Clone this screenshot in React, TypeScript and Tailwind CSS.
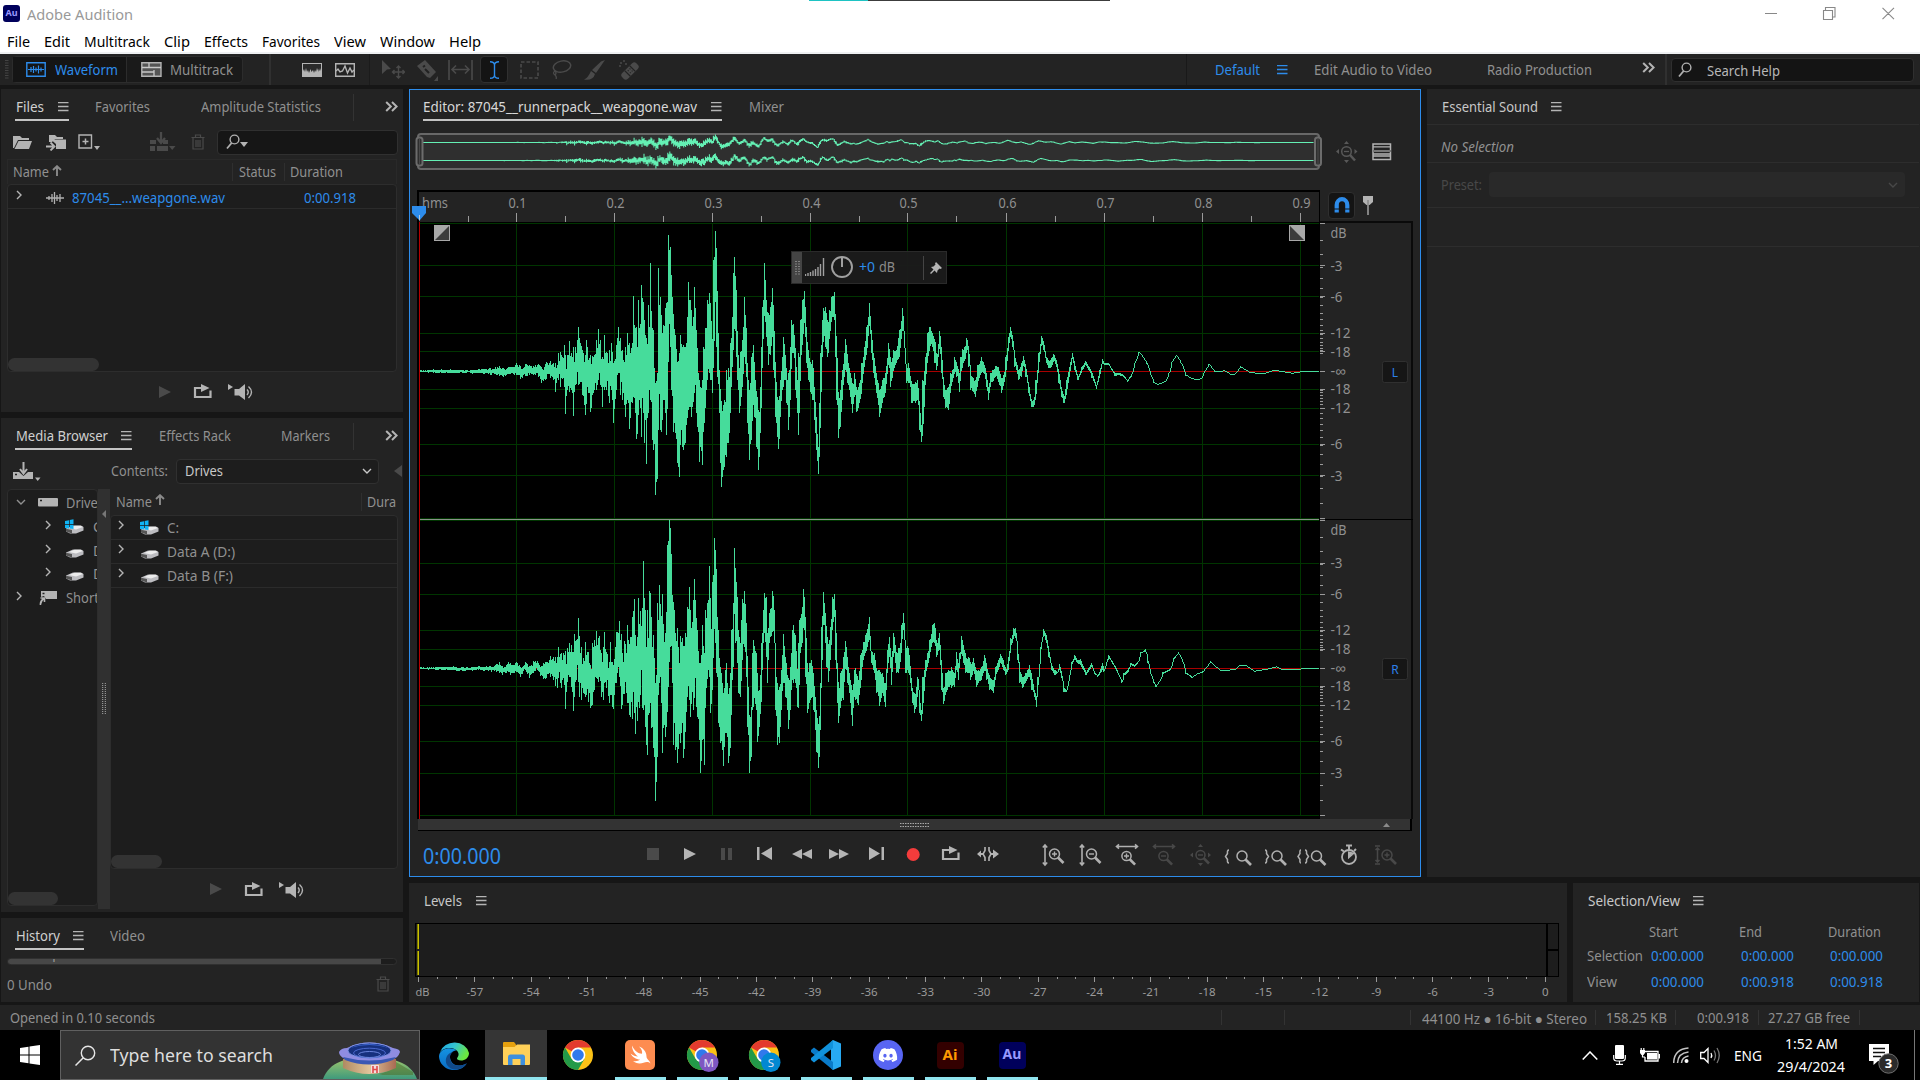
import React, { useLayoutEffect, useRef, useState } from "react";
import { FaDiscord } from "react-icons/fa";

/* ---------- text fitted to a fixed measure ---------- */
function T({ w, className = "", children }: { w: number; className?: string; children: string }) {
  const ref = useRef<HTMLSpanElement>(null);
  const [scale, setScale] = useState(1);
  useLayoutEffect(() => {
    if (ref.current) setScale(w / (ref.current.getBoundingClientRect().width || w));
  }, [w]);
  return (
    <span className={"inline-block shrink-0 " + className} style={{ width: w }}>
      <span ref={ref} className="inline-block origin-left whitespace-pre" style={{ transform: `scaleX(${scale})` }}>
        {children}
      </span>
    </span>
  );
}

function Svg({ w, h, box, className = "", children }: { w: number; h: number; box?: string; className?: string; children: React.ReactNode }) {
  return (
    <svg width={w} height={h} viewBox={box ?? `0 0 ${w} ${h}`} className={"shrink-0 " + className} fill="none">
      {children}
    </svg>
  );
}

/* ---------- small glyphs ---------- */
const Burger = ({ className = "" }: { className?: string }) => (
  <Svg w={11} h={10} className={className}><path d="M0 .5H10.5M0 4.5H10.5M0 8.5H10.5" stroke="currentColor" strokeWidth="1.3" /></Svg>
);
const More = ({ className = "" }: { className?: string }) => (
  <Svg w={13} h={11} className={className}><path d="M1.2 1L5.8 5.5L1.2 10M7 1L11.6 5.5L7 10" stroke="#b4b4b4" strokeWidth="2" /></Svg>
);
const Right = ({ className = "" }: { className?: string }) => (
  <Svg w={6} h={10} className={className}><path d="M1 1L5 5L1 9" stroke="#b4b4b4" strokeWidth="1.4" /></Svg>
);
const Down = ({ className = "" }: { className?: string }) => (
  <Svg w={10} h={6} className={className}><path d="M1 1L5 5L9 1" stroke="currentColor" strokeWidth="1.4" /></Svg>
);
const UpArrow = ({ className = "" }: { className?: string }) => (
  <Svg w={10} h={12} className={className}><path d="M5 11V2M1 5L5 1.2L9 5" stroke="#8a8a8a" strokeWidth="1.9" /></Svg>
);
const Trash = ({ className = "" }: { className?: string }) => (
  <Svg w={14} h={16} className={className}>
    <path d="M.5 3.5H13.5M4.5 3V1H9.5V3M2 4V15H12V4M5 6V13M7 6V13M9 6V13" stroke="#4a4a4a" strokeWidth="1.2" />
  </Svg>
);
const Play = ({ c = "#b4b4b4", className = "" }: { c?: string; className?: string }) => (
  <Svg w={12} h={14} className={className}><path d="M0 1L12 7L0 13Z" fill={c} /></Svg>
);
const Loop = ({ className = "" }: { className?: string }) => (
  <Svg w={20} h={15} className={className}>
    <path d="M6 4H2V13H17.5V6.5" stroke="#b4b4b4" strokeWidth="2.2" />
    <path d="M6 4H9" stroke="#b4b4b4" strokeWidth="2" />
    <path d="M8 0L16.5 4L8 8Z" fill="#b4b4b4" />
  </Svg>
);
const Speaker = ({ className = "" }: { className?: string }) => (
  <Svg w={27} h={18} className={className}>
    <path d="M0 1L5 4L0 7Z" fill="#b4b4b4" />
    <path d="M6.500 6H11L17 1V17L11 12.500H6.500Z" fill="#b4b4b4" />
    <path d="M19 6.500Q21.500 9 19 12M20.500 3.500Q26.500 9 20.500 15" stroke="#b4b4b4" strokeWidth="1.400" />
  </Svg>
);
const Lens = ({ className = "" }: { className?: string }) => (
  <Svg w={14} h={16} className={className}>
    <circle cx="8.5" cy="5.5" r="4.4" stroke="#b0b0b0" strokeWidth="1.4" />
    <path d="M5.600 9L1 14.500" stroke="#b0b0b0" strokeWidth="1.800" />
  </Svg>
);
const Drive = ({ win = false, className = "" }: { win?: boolean; className?: string }) => (
  <Svg w={20} h={16} className={className}>
    <path d="M1 9.500L8 6.500H16L18.500 8V11.500L11 14.500H5L1 12.500Z" fill="#bcbcc0" />
    <path d="M4 9L9.500 6.700H15.500L18 8L11 10.500Z" fill="#ececec" />
    <path d="M1 9.800L7 11V14.500L1 12.500Z" fill="#555" />
    {win && <path d="M0 2L4 1.200V5H0ZM4.700 1L8.500 .3V5H4.700ZM0 5.700H4V9.500L0 9ZM4.700 5.700H8.500V10L4.700 9.600Z" fill="#10b4f4" />}
  </Svg>
);

/* ---------- waveform samples: x, top, bottom triplets ---------- */
const LEFT_A = "60 871 877 100 868 879 150 868 880 200 869 880 250 867 882 270 864 884 297 857 888 310 864 892 325 860 882 350 850 886 362 858 898 375 852 888 400 857 885 415 852 890 425 862 908 440 845 895 450 842 893 460 850 900 467 850 935 475 820 900 482 815 920 493 796 920 497 825 1002 501 825 930 508 783 935 515 820 930 520 800 1008 526 800 915 535 742 915 542 790 905 548 810 945 556 825 1005 560 780 950 572 825 995 580 830 940 588 780 930 595 748 900 601 780 915 606 830 980 612 766 930 620 815 930 628 810 968 634 788 930 640 850 1028 648 795 930 655 740 880 661 775 945 668 810 960 676 800 1010 683 760 960 689 795 1048 697 790 960 701 648 950 707 745 1000 710 740 1078 715 660 1005 721 745 985 725 615 1070 731 665 1000 733 720 1090 739 775 1152 745 676 1000 748 740 930 751 550 960 757 745 1080 761 750 1110 766 910 1245 772 880 1190 775 565 1050 781 650 1050 785 740 1055 790 735 960 796 685 1000 799 670 1065 803 665 930 806 465 740 810 500 800 815 600 930 820 715 1055 826 765 1060 832 845 1150 838 820 1190 842 765 1060 846 800 1100 850 795 1110 856 800 1090 861 710 1015 865 605 990 870 660 980 874 690 1010 880 710 960 884 620 940 889 750 1000 893 845 1040 898 900 1145 902 920 1100 906 900 1155 910 800 1055 916 745 985 922 660 890 927 640 880 932 670 900 937 780 940 941 540 830 946 452 640 950 555 800 953 720 890 957 870 1000 962 950 1150 965 980 1220 970 975 1170 974 960 1160 978 870 1130 984 865 1090 989 905 1050 992 790 950 996 710 860 1000 580 800 1003 532 735 1008 630 830 1012 770 900 1018 880 998 1022 815 975 1026 780 920 1033 650 830 1038 745 890 1042 860 1030 1048 930 1140 1053 830 1080 1060 795 970 1064 880 1010 1070 940 1100 1076 990 1170 1080 920 1060 1084 800 960 1088 680 800 1093 548 700 1098 660 770 1104 700 855 1110 680 825 1117 625 765 1121 720 870 1126 870 1010 1131 950 1070 1136 960 1108 1140 900 1010 1146 830 930 1150 770 920 1154 800 900 1160 890 970 1165 880 1050 1170 800 960 1175 720 830 1181 740 820 1186 820 930 1192 900 1000 1196 820 1065 1202 720 850 1208 660 780 1213 632 720 1218 740 850 1224 810 900 1231 850 935 1238 840 960 1242 920 1020 1248 1010 1110 1254 1100 1182 1258 970 1120 1262 820 1000 1266 720 830 1271 685 770 1276 680 800 1283 730 830 1289 690 760 1295 650 720 1302 636 720 1306 720 830 1310 800 960 1315 950 1075 1320 930 1040 1326 870 960 1332 820 890 1336 778 870 1342 830 910 1350 880 950 1357 910 1000 1364 880 940 1370 930 997 1378 910 970 1385 850 930 1392 800 860 1400 740 820 1408 670 730 1413 750 820 1420 820 880 1428 880 940 1438 930 1010 1446 900 970 1455 880 940 1465 790 850 1472 840 920 1480 810 870 1488 810 850 1498 750 830";
const LEFT_B = "8 685 740 18 870 910 25 850 910 30 890 920 35 910 970 45 905 970 52 900 960 58 980 1050 63 1040 1087 68 900 1050 75 830 900 82 760 840 88 740 800 95 760 800 103 780 850 108 830 870 117 752 800 122 800 880 128 900 950 135 930 985 143 920 990 150 880 925 156 870 900 162 830 880 168 850 890 175 880 935 180 830 880 186 808 850 192 800 840 198 775 810 204 820 860 210 880 930 222 900 950 230 855 910 240 832 880 248 850 880 255 880 920 261 920 960 268 880 910 275 870 905 282 858 890 290 860 905 300 895 938 306 885 915 313 830 880 320 770 810 326 740 770 333 770 800 340 830 860 350 870 900 358 850 890 365 827 855 372 860 890 380 910 940 388 960 982 395 960 982 402 900 950 410 820 860 418 768 790 425 790 810 432 830 850 440 845 865 448 835 860 454 823 840 462 840 860 470 880 910 478 930 950 485 950 970 492 900 940 500 860 890 509 818 835 516 850 870 526 890 900 538 860 872 548 843 855 558 860 870 568 880 895 580 915 926 590 870 890 598 838 850 605 850 856 617 848 854 625 865 870 635 880 888 647 878 885 660 885 890 672 900 905 685 882 888 693 850 856 706 815 818 718 828 832 730 848 852 740 880 884 750 905 909 762 912 915 785 902 905 795 880 884 803 845 850 817 824 827 830 845 848 845 884 887 862 894 896 875 897 899 890 895 897 900 872 875 914 853 855 930 873 875 960 871 873 980 883 885 990 881 883 1007 859 861 1035 876 878 1075 880 882 1105 869 871 1160 878 880 1185 874 876 1240 872 874";
const RIGHT_A = "60 472 478 160 468 481 170 472 484 235 469 481 250 471 483 290 462 486 297 456 488 308 468 494 325 455 485 332 460 495 350 455 487 360 470 502 375 457 480 388 468 503 400 452 488 413 452 480 420 470 497 430 458 508 440 455 505 450 438 500 460 440 510 467 442 527 472 440 535 475 412 505 485 430 535 490 430 505 497 422 597 503 415 510 508 398 500 514 405 530 520 425 602 524 373 560 530 390 490 535 325 515 539 390 560 543 410 570 550 445 550 557 397 560 565 425 575 572 465 593 578 400 585 584 390 530 589 362 505 595 385 515 598 378 500 605 430 560 610 410 570 613 366 520 620 425 535 627 455 578 631 395 555 637 460 590 640 465 597 645 410 520 650 365 520 657 333 500 663 372 598 668 430 585 674 392 545 680 430 550 683 345 580 688 410 615 692 380 620 697 320 628 703 267 610 707 375 672 712 380 625 716 265 560 719 350 595 722 303 510 727 295 595 730 154 600 735 300 650 740 410 705 743 300 735 748 242 610 752 250 580 755 320 655 760 375 715 764 445 740 767 520 872 771 400 740 773 280 660 779 224 520 783 318 580 787 252 728 791 375 655 796 370 680 800 305 650 803 105 560 806 92 530 809 30 410 812 55 410 816 255 520 820 275 705 824 300 640 827 380 720 832 355 760 836 455 680 842 378 700 847 385 640 851 410 745 857 370 640 863 290 560 868 230 570 872 315 620 877 335 540 881 270 600 884 208 530 889 325 590 893 380 620 898 460 690 901 460 788 907 345 690 912 430 766 916 300 590 922 280 500 929 167 500 932 345 608 937 215 540 943 83 330 947 125 400 950 275 490 954 360 640 958 445 650 962 480 700 967 520 720 970 550 768 975 480 670 979 460 670 985 555 760 991 490 715 995 360 530 999 280 470 1003 115 270 1007 200 400 1011 260 460 1015 360 550 1020 400 560 1025 330 500 1028 268 400 1034 242 410 1039 355 500 1043 490 650 1048 620 790 1053 590 740 1057 430 560 1061 390 590 1068 430 600 1073 520 695 1078 540 650 1084 400 560 1089 300 400 1093 250 370 1098 262 440 1101 370 520 1107 310 400 1112 298 380 1118 242 360 1122 300 400 1127 490 600 1132 520 705 1138 530 700 1143 480 600 1149 372 520 1156 440 560 1165 505 658 1170 470 600 1176 360 510 1181 345 520 1187 390 520 1192 480 590 1196 400 595 1199 330 450 1206 290 400 1211 237 330 1216 330 500 1223 490 610 1228 460 580 1234 450 560 1241 500 600 1245 560 660 1250 610 725 1256 650 775 1260 520 660 1264 350 520 1270 247 320 1275 310 400 1280 370 470 1285 405 515 1291 350 440 1297 262 360 1302 253 320 1307 330 450 1311 460 580 1316 530 640 1322 490 580 1329 440 570 1336 392 470 1343 460 520 1350 510 580 1356 540 648 1362 480 560 1367 475 570 1374 510 585 1382 435 520 1389 395 450 1397 375 430 1407 320 390 1413 425 460 1422 430 490 1430 480 550 1438 480 588 1446 490 550 1455 520 590 1461 420 490 1467 382 440 1473 440 525 1481 368 420 1488 425 490 1495 415 490 1502 400 450";
const RIGHT_B = "5 345 400 10 308 350 16 400 490 25 415 490 30 470 520 36 540 580 43 550 610 48 530 590 53 500 540 58 570 610 63 600 633 68 500 590 75 450 490 82 430 470 88 390 430 96 345 400 102 338 400 108 400 440 116 370 420 122 450 540 128 540 583 136 490 550 144 480 530 152 470 535 160 490 530 166 425 480 172 460 510 177 430 450 182 378 430 188 410 460 195 440 490 202 440 490 210 455 510 217 445 480 225 480 530 233 480 520 240 470 510 250 435 480 257 470 510 265 500 540 276 510 548 283 470 500 290 450 480 297 432 460 305 450 480 313 480 495 320 440 480 328 385 410 337 353 380 342 355 385 348 420 450 355 480 520 362 500 535 370 490 520 382 466 500 390 500 540 397 540 560 403 560 590 408 500 530 415 410 430 424 357 370 432 375 400 440 420 440 448 465 480 456 480 495 465 485 490 471 463 480 478 490 505 485 535 545 492 540 546 500 495 510 508 455 465 516 436 448 524 450 460 533 448 465 540 465 478 550 485 495 566 460 470 575 488 492 585 495 500 598 460 480 603 478 485 610 455 462 617 435 445 625 450 457 637 470 478 648 495 500 656 512 518 662 490 496 672 480 490 683 460 466 693 465 470 703 455 460 712 427 430 726 418 424 733 450 460 740 485 492 750 515 520 757 526 530 765 515 520 778 487 492 800 475 480 808 445 450 823 427 430 835 450 455 845 487 492 863 500 503 880 490 492 895 484 488 918 454 457 935 470 473 950 481 483 990 477 479 1003 466 468 1023 466 468 1047 482 484 1080 477 479 1113 469 471 1130 477 479 1160 478 480 1200 474 476 1240 474 476";

type Sample = [number, number, number];
function parse(a: string, b: string, mid: number): Sample[] {
  const read = (s: string, off: number, k: number) => {
    const n = s.split(" ").map(Number);
    const out: Sample[] = [];
    for (let i = 0; i < n.length; i += 3) out.push([off + n[i] / k, (n[i + 1] - mid) / 3, (n[i + 2] - mid) / 3]);
    return out;
  };
  return [...read(a, 400, 3), ...read(b, 900, 2.9585)];
}
function columns(pts: Sample[]): Sample[] {
  const out: Sample[] = [];
  let k = 0;
  let seed = 7;
  const rnd = () => ((seed = (seed * 16807) % 2147483647) / 2147483647);
  for (let x = 420; x < 1319; x++) {
    while (k < pts.length - 2 && pts[k + 1][0] < x) k++;
    const [p, q] = [pts[k], pts[k + 1]];
    const f = Math.max(0, Math.min(1, (x - p[0]) / (q[0] - p[0])));
    let t = p[1] + (q[1] - p[1]) * f;
    let b = p[2] + (q[2] - p[2]) * f;
    const j = (b - t) * (x < 660 ? 0.28 : x < 1040 ? 0.14 : 0);
    t += rnd() * j;
    b -= rnd() * j;
    out.push([x, t, b]);
  }
  for (const [x, t, b] of pts) {
    const c = out[Math.floor(x) - 420];
    if (!c) continue;
    c[1] = Math.min(c[1], t);
    c[2] = Math.max(c[2], b);
  }
  for (let i = 1; i < out.length; i++) {
    const [, pt, pb] = out[i - 1];
    if (out[i][1] > pb) out[i][1] = pb;
    if (out[i][2] < pt) out[i][2] = pt;
  }
  return out;
}
const L = columns(parse(LEFT_A, LEFT_B, 874));
const R = columns(parse(RIGHT_A, RIGHT_B, 475));
const wave = (c: Sample[], mid: number) => c.map(([x, t, b]) => `M${x + 0.5} ${(mid + t).toFixed(1)}V${(mid + Math.max(b, t + 1)).toFixed(1)}`).join("");
const mini = (c: Sample[], mid: number) =>
  c.map(([x, t, b], i) => {
    const m = mid + ((t + b) / 2) * 0.054;
    const h = Math.max(0.55, (b - t) * (i % 2 ? 0.034 : 0.022));
    return `M${(423 + ((x - 420) * 891) / 899).toFixed(1)} ${(m - h).toFixed(1)}V${(m + h).toFixed(1)}`;
  }).join("");

const GX = [516.5, 614.5, 712.5, 810.5, 907.5, 1006.5, 1104.5, 1202.5, 1300.5];
const GL = [223.5, 265.5, 296.5, 333.5, 351.5, 389.5, 408.5, 444.5, 475.5, 518.5];
const GR = [520.5, 563.5, 594.5, 630.5, 649.5, 686.5, 705.5, 741.5, 773.5, 815.5];
const DBL: [string, number][] = [["dB", 233], ["-3", 266], ["-6", 297], ["-12", 333], ["-18", 352], ["-∞", 371], ["-18", 389], ["-12", 408], ["-6", 444], ["-3", 476]];
const DBR: [string, number][] = [["dB", 530], ["-3", 563], ["-6", 594], ["-12", 630], ["-18", 649], ["-∞", 668], ["-18", 686], ["-12", 705], ["-6", 741], ["-3", 773]];

function Overview() {
  return (
    <Svg w={908} h={38} box="415 133 908 38">
      <rect x="418" y="134" width="901" height="35" rx="3" fill="#2f2f2f" stroke="#686868" strokeWidth="2" />
      <path d={mini(L, 142.500)} stroke="#64f0b4" strokeWidth="1.100" />
      <path d={mini(R, 160.500)} stroke="#64f0b4" strokeWidth="1.100" />
      <rect x="416.500" y="137.500" width="6" height="28" rx="2.500" fill="#2f2f2f" stroke="#6c6c6c" strokeWidth="2" />
      <rect x="1315" y="137.500" width="6" height="28" rx="2.500" fill="#2f2f2f" stroke="#6c6c6c" strokeWidth="2" />
      <path d="M419.500 139V164M1318 139V164" stroke="#4a4a4a" />
    </Svg>
  );
}

function Chart() {
  return (
    <Svg w={903} h={629} box="417 190 903 629">
      <rect x="417" y="190" width="903" height="629" fill="#000" />
      <rect x="419" y="192" width="900" height="30" fill="#232323" />
      <g fontFamily="Noto Sans, sans-serif" fontSize="14" fill="#909090">
        <text x="422" y="208" textLength="26" lengthAdjust="spacingAndGlyphs">hms</text>
        {GX.map((x, i) => (
          <text key={x} x={x - 8} y="208" textLength="18" lengthAdjust="spacingAndGlyphs">{"0." + (i + 1)}</text>
        ))}
      </g>
      <g shapeRendering="crispEdges">
        {GX.map((x) => <path key={x} d={`M${x} 213V222`} stroke="#9a9a9a" />)}
        {[468, ...GX.slice(0, 8).map((x) => x + 49)].map((x) => <path key={x} d={`M${x} 216V222`} stroke="#9a9a9a" />)}
        {GX.map((x) => <path key={"g" + x} d={`M${x} 223V815`} stroke="#003500" />)}
        {[...GL, ...GR].map((y) => <path key={y} d={`M420 ${y}H1319`} stroke="#003500" />)}
        <path d="M420 371.500H1319M420 668.500H1319" stroke="#a80000" />
        <path d={wave(L, 371.300)} stroke="#46dc9b" />
        <path d={wave(R, 668.300)} stroke="#46dc9b" />
        <path d="M420 519.500H1319" stroke="#8a928a" />
        <path d="M419.500 222V819" stroke="#b40000" />
      </g>
      <rect x="434.500" y="225.500" width="15" height="15" fill="#3c3c3c" stroke="#a8a8a8" />
      <path d="M435 240V226H449Z" fill="#a8a8a8" />
      <rect x="1289.500" y="225.500" width="15" height="15" fill="#3c3c3c" stroke="#a8a8a8" />
      <path d="M1304 240V226H1290Z" fill="#a8a8a8" />
    </Svg>
  );
}

function Scale() {
  const ticks: number[] = [];
  for (let n = 1; n <= 18; n++) {
    const a = 147.5 * Math.pow(10, -n / 20);
    [371.3, 668.3].forEach((c) => ticks.push(Math.round(c - a), Math.round(c + a)));
  }
  return (
    <Svg w={93} h={598} box="1320 221 93 598">
      <rect x="1320" y="221" width="93" height="598" fill="#0a0a0a" />
      <rect x="1320" y="223" width="91" height="596" fill="#232323" />
      <rect x="1325" y="519" width="88" height="1" fill="#000" />
      <g shapeRendering="crispEdges" stroke="#9a9a9a">
        {ticks.map((y, i) => <path key={i} d={`M1320 ${y + 0.5}H1323`} />)}
        {[...GL, ...GR, 371.5, 668.5].map((y) => <path key={y} d={`M1320 ${y}H1325`} />)}
      </g>
      <g fontFamily="Noto Sans, sans-serif" fontSize="14" fill="#909090">
        {[...DBL, ...DBR].map(([t, y]) => (
          <text key={t + y} x="1330.500" y={y + 5} textLength={t === "dB" ? 16 : t === "-∞" ? 15 : t.length > 2 ? 20 : 12} lengthAdjust="spacingAndGlyphs">{t}</text>
        ))}
      </g>
      {[["L", 361], ["R", 658]].map(([t, y]) => (
        <g key={t}>
          <rect x="1382.500" y={Number(y) + 0.5} width="25" height="21" rx="2" fill="#161616" stroke="#303030" />
          <text x="1395" y={Number(y) + 15.5} fontFamily="Noto Sans, sans-serif" fontSize="12" fill="#2d7fe8" textAnchor="middle">{t}</text>
        </g>
      ))}
    </Svg>
  );
}

/* ---------- zoom tool glyphs, drawn on a 30×24 field ---------- */
function ZoomGlyph({ k }: { k: string }) {
  const off = k === "outw" || k === "full" || k === "sel";
  const c = off ? "#484848" : "#b0b0b0";
  const lens = (x: number, y: number, r: number) => (
    <>
      <circle cx={x} cy={y} r={r} stroke={c} strokeWidth="1.5" />
      <path d={`M${x + r * 0.7} ${y + r * 0.7}L${x + r + 4} ${y + r + 4}`} stroke={c} strokeWidth="2.6" />
    </>
  );
  const plus = (x: number, y: number, p: boolean) => <path d={`M${x - 2.5} ${y}H${x + 2.5}${p ? `M${x} ${y - 2.5}V${y + 2.5}` : ""}`} stroke={c} strokeWidth="1.4" />;
  return (
    <Svg w={30} h={24}>
      {(k === "in" || k === "out") && <><path d="M7 3V21M4.800 4.500L7 2L9.200 4.500M4.800 19.500L7 22L9.200 19.500" stroke={c} strokeWidth="1.600" />{lens(16.5, 11, 5)}{plus(16.5, 11, k === "in")}</>}
      {(k === "inw" || k === "outw") && <><path d="M5 3.500H25M7 1.300L4.500 3.500L7 5.700M23 1.300L25.500 3.500L23 5.700" stroke={c} strokeWidth="1.600" />{lens(14.5, 13, 4.6)}{plus(14.5, 13, k === "inw")}</>}
      {k === "full" && <>{lens(14.5, 12, 4.5)}{plus(14.5, 12, false)}<path d="M12 4L14.500 1L17 4ZM12 20L14.500 23L17 20ZM7 9.500L4 12L7 14.500ZM22 9.500L25 12L22 14.500Z" fill={c} /></>}
      {k === "l" && <>{lens(19, 13, 5)}<path d="M6 7Q4 7 4.500 10.500L2.500 13.500L4.500 16.500Q4 20 6 20" stroke={c} strokeWidth="1.500" /></>}
      {k === "r" && <>{lens(17, 13, 5)}<path d="M5 7Q7 7 6.500 10.500L8.500 13.500L6.500 16.500Q7 20 5 20" stroke={c} strokeWidth="1.500" /></>}
      {k === "lr" && <>{lens(19.5, 13, 5)}<path d="M4 7Q2.500 7 3 10.500L1 13.500L3 16.500Q2.500 20 4 20M8 7Q10 7 9.500 10.500L11.500 13.500L9.500 16.500Q10 20 8 20" stroke={c} strokeWidth="1.500" /></>}
      {k === "clock" && <><circle cx="15" cy="14" r="7" stroke={c} strokeWidth="1.800" /><path d="M15 14V9.500L19 10.500ZM15 7V3M12 2.500H18M7 6.500L10 8.500M20 8L22 6" stroke={c} fill={c} strokeWidth="2" /></>}
      {k === "sel" && <><path d="M4 3H9M4 21H9M6.500 5V19M4.500 7L6.500 5L8.500 7M4.500 17L6.500 19L8.500 17" stroke={c} strokeWidth="1.500" />{lens(16, 12, 5)}{plus(16, 12, true)}</>}
    </Svg>
  );
}

function Transport() {
  const g = "#b4b4b4";
  const cells = [
    <Svg w={12} h={12}><rect width="12" height="12" fill="#4a4a4a" /></Svg>,
    <Play />,
    <Svg w={12} h={12}><path d="M0 0H4V12H0ZM7 0H11V12H7Z" fill="#4a4a4a" /></Svg>,
    <Svg w={15} h={13}><path d="M0 0H2.500V13H0ZM15 0V13L4 6.500Z" fill={g} /></Svg>,
    <Svg w={20} h={12}><path d="M10 1V11L0 6ZM20 1V11L10 6Z" fill={g} /></Svg>,
    <Svg w={20} h={12}><path d="M0 1V11L10 6ZM10 1V11L20 6Z" fill={g} /></Svg>,
    <Svg w={15} h={13}><path d="M15 0H12.500V13H15ZM0 0V13L11 6.500Z" fill={g} /></Svg>,
    <Svg w={14} h={14}><circle cx="7.200" cy="7.500" r="6.500" fill="#f43c3c" /></Svg>,
    <Loop />,
    <Svg w={22} h={16}><path d="M8 1V4.500L6 8L8 11.500V15M12 1V4.500L14 8L12 11.500V15" stroke={g} strokeWidth="1.600" /><path d="M0 8L4 4.500V7H6V9H4V11.500ZM13 7H16V3.500L22 8L16 12.500V9H13Z" fill={g} /></Svg>,
  ];
  return (
    <div className="flex h-[45px] items-center">
      <T w={78} className="ml-[13px] mt-[5px] text-[21px] text-[#2d8ceb]">0:00.000</T>
      <div className="ml-[133px] flex items-center">
        {cells.map((c, i) => <div key={i} className="flex h-[24px] w-[37.250px] items-center justify-center">{c}</div>)}
      </div>
      <div className="ml-[28px] mt-[2px] flex items-center">
        {["in", "out", "inw", "outw", "full", "l", "r", "lr", "clock", "sel"].map((k) => (
          <div key={k} className="flex w-[37.050px] items-center justify-center"><ZoomGlyph k={k} /></div>
        ))}
      </div>
    </div>
  );
}

function Hud() {
  return (
    <div className="absolute left-[381px] top-[161px] flex h-[33px] w-[156px] items-center border border-[#2a2a2a] bg-[#1b1b1b]/95">
      <div className="flex h-full w-[10px] items-center justify-center bg-[#444]">
        <Svg w={5} h={14}><path d="M1 0V14M4 0V14" stroke="#aaa" strokeWidth="1.200" strokeDasharray="1 1.500" /></Svg>
      </div>
      <Svg w={20} h={18} className="-mt-[2px] ml-[3px]"><path d="M.5 18V16M3 18V15M5.500 18V14M8 18V12.500M10.500 18V11M13 18V9M15.500 18V6M18.500 18V0" stroke="#a0a0a0" strokeWidth="1.400" /></Svg>
      <Svg w={24} h={24} className="-mt-[2px] ml-[5px]"><circle cx="12" cy="12" r="10" stroke="#a0a0a0" strokeWidth="1.900" /><path d="M12 2V12" stroke="#a0a0a0" strokeWidth="2" /></Svg>
      <T w={16} className="-mt-[2px] ml-[5px] text-[14px] text-[#2d8ceb]">+0</T>
      <T w={16} className="-mt-[2px] ml-[4px] text-[14px] text-[#8a8a8a]">dB</T>
      <div className="ml-[28px] h-[24px] w-px bg-[#444]" />
      <Svg w={12} h={12} className="ml-[6px]"><path d="M6 0L12 6L10.500 7L9.500 6.500L7.500 8.500L7 11L4.500 8.500L1 12L0 11L3.500 7.500L1 5L3.500 4.500L5.500 2.500L5 1.500Z" fill="#b4b4b4" /></Svg>
    </div>
  );
}

function Editor() {
  return (
    <section className="relative flex h-[788px] w-[1012px] shrink-0 flex-col border border-[#2d8ceb] bg-[#232323]">
      <div className="flex h-[43px]">
        <div className="ml-[13px] flex h-[31px] w-[299px] items-center justify-between border-b-2 border-[#c4c4c4] pt-[5px] text-[#d8d8d8]">
          <T w={274}>Editor: 87045__runnerpack__weapgone.wav</T>
          <Burger className="text-[#b4b4b4]" />
        </div>
        <div className="ml-[27px] flex h-[31px] items-center pt-[3px]"><T w={35}>Mixer</T></div>
      </div>
      <div className="flex h-[57px]">
        <div className="ml-[5px]"><Overview /></div>
        <Svg w={22} h={22} className="ml-[13px] mt-[8px]">
          <circle cx="10.500" cy="10.500" r="4.800" stroke="#585858" strokeWidth="1.500" />
          <path d="M8 10.500H13" stroke="#585858" strokeWidth="1.300" /><path d="M14 14L19 19.500" stroke="#585858" strokeWidth="2.500" />
          <path d="M8 3L10.500 0L13 3ZM8 19L10.500 22L13 19ZM3 8L0 10.500L3 13ZM18.500 8L21.500 10.500L18.500 13Z" fill="#585858" />
        </Svg>
        <Svg w={20} h={18} className="ml-[14px] mt-[10px]"><path d="M1 1H18.500V16.500H1Z" stroke="#b4b4b4" strokeWidth="1.500" /><path d="M1 3.800H19M1 13H19M1 11H19" stroke="#b4b4b4" strokeWidth="1.300" /><path d="M1 8H19" stroke="#777" strokeWidth="2" /></Svg>
      </div>
      <div className="flex h-[629px]">
        <div className="ml-[7px]"><Chart /></div>
        <div className="flex w-[93px] flex-col">
          <div className="flex h-[31px] items-center">
            <div className="ml-[8px] flex h-[27px] w-[27px] items-center justify-center rounded-sm border border-[#2f2f2f] bg-[#141414]">
              <Svg w={16} h={17}><path d="M2.700 15.500V8A5.300 5.800 0 0 1 13.300 8V15.500" stroke="#2d8ceb" strokeWidth="4.200" /><path d="M0 12H5.500M10.500 12H16" stroke="#141414" /></Svg>
            </div>
            <Svg w={10} h={19} className="ml-[8px]"><path d="M0 0H10V6L6.500 9H3.500L0 6Z" fill="#b4b4b4" /><path d="M5 4V19" stroke="#8e8e8e" strokeWidth="1.800" /></Svg>
          </div>
          <Scale />
        </div>
      </div>
      <div className="ml-[8px] flex h-[12px] w-[994px] items-center border-b border-r-2 border-black bg-[#333]">
        <Svg w={30} h={4} className="ml-[482px]"><path d="M0 .5H30M0 3.500H30" stroke="#aaa" strokeDasharray="1.500 1" /></Svg>
        <Svg w={7} h={4} className="ml-[453px]"><path d="M0 4L3.500 0L7 4Z" fill="#8a8a8a" /></Svg>
      </div>
      <Transport />
      <Hud />
      <Svg w={15} h={17} className="absolute left-[2px] top-[115px]"><path d="M0 1H14V8L7.500 15.500L0 8Z" fill="#2d8ceb" /><path d="M7.500 10V15.500" stroke="#b9c6d4" /></Svg>
    </section>
  );
}

function Tab({ w, tw, children }: { w: number; tw: number; children: string }) {
  return (
    <div className="flex h-[32px] items-center justify-between border-b-2 border-[#c4c4c4] pl-px pt-[6px] text-[#d0d0d0]" style={{ width: w }}>
      <T w={tw}>{children}</T>
      <Burger className="text-[#b4b4b4]" />
    </div>
  );
}

function FilesPanel() {
  return (
    <section className="flex h-[323px] flex-col bg-[#232323]">
      <div className="flex h-[36px]">
        <div className="ml-[14px]"><Tab w={54} tw={28}>Files</Tab></div>
        <div className="flex items-center">
          <T w={55} className="ml-[26px]">Favorites</T>
          <T w={120} className="ml-[51px]">Amplitude Statistics</T>
          <div className="ml-[32px] h-[27px] w-px bg-[#333]" />
          <More className="-mt-[2px] ml-[31px]" />
        </div>
      </div>
      <div className="flex h-[34px] items-center">
        <Svg w={19} h={15} className="ml-[12px]"><path d="M0 13V1H7L9 3H16V5H5L1 13ZM5.500 6H19L16 14H1.500Z" fill="#b4b4b4" /></Svg>
        <Svg w={20} h={17} className="ml-[14px]"><path d="M3 8V1H9L11 3H17V5H9L6 8ZM9 5.500H20V15H10V10L6 6.500Z" fill="#b4b4b4" /><path d="M0 12.500H7M4.500 8.500L8.500 12.500L4.500 16.500" stroke="#b4b4b4" strokeWidth="1.800" /></Svg>
        <Svg w={22} h={16} className="ml-[12px]"><path d="M1 1H13.500V14H1Z" stroke="#b4b4b4" strokeWidth="1.400" /><path d="M4.500 7.500H10.500M7.500 4.500V10.500" stroke="#b4b4b4" strokeWidth="1.500" /><path d="M16 12H22L19 16Z" fill="#b4b4b4" /></Svg>
        <Svg w={26} h={20} className="ml-[50px]"><path d="M0 8H6V12H0ZM13 8H18V12H13ZM0 14H5V19H0ZM7 14H18V19H7ZM19 14H25.500L22.200 18Z" fill="#4a4a4a" /><path d="M11 0V9M7 6L11 11L15 6" stroke="#4a4a4a" strokeWidth="2.300" /></Svg>
        <Trash className="ml-[15px]" />
        <div className="ml-[12px] flex h-[25px] w-[181px] items-center rounded-sm border border-[#303030] bg-[#161616]">
          <Lens className="ml-[8px]" />
          <Svg w={8} h={5} className="mt-[5px]"><path d="M0 0H8L4 5Z" fill="#b4b4b4" /></Svg>
        </div>
      </div>
      <div className="mx-[6px] flex h-[25px] items-center border border-b-0 border-[#292929]">
        <T w={36} className="ml-[5px]">Name</T><UpArrow className="-mt-[3px] ml-[3px]" />
        <div className="ml-[170px] h-[18px] w-px bg-[#2f2f2f]" />
        <T w={37} className="ml-[6px]">Status</T>
        <div className="ml-[8px] h-[18px] w-px bg-[#2f2f2f]" />
        <T w={53} className="ml-[5px]">Duration</T>
      </div>
      <div className="mx-[6px] flex h-[188px] flex-col rounded-sm border border-[#2d2d2d] bg-[#1d1d1d]">
        <div className="flex h-[24px] items-center border-b border-[#2b2b2b] pt-[2px]">
          <Right className="-mt-[6px] ml-[8px]" />
          <Svg w={18} h={12} className="ml-[24px]"><path d="M0 6H18M3 4V8M6 2V10M8.500 0V12M11 3V9M14 2V10" stroke="#b0b0b0" strokeWidth="1.300" /></Svg>
          <T w={153} className="ml-[8px] text-[#2d8ceb]">87045__...weapgone.wav</T>
          <T w={52} className="ml-[79px] text-[#2d8ceb]">0:00.918</T>
        </div>
        <div className="mt-auto h-[13px] w-[91px] rounded-full bg-[#333]" />
      </div>
      <div className="flex h-[40px] items-center">
        <Play c="#4a4a4a" className="-mt-px ml-[158px]" /><Loop className="-mt-px ml-[22px]" /><Speaker className="ml-[15px]" />
      </div>
    </section>
  );
}

function MediaPanel() {
  return (
    <section className="mt-[6px] flex h-[494px] flex-col overflow-hidden bg-[#232323]">
      <div className="flex h-[36px]">
        <div className="ml-[14px]"><Tab w={117} tw={92}>Media Browser</Tab></div>
        <div className="flex items-center">
          <T w={72} className="ml-[27px]">Effects Rack</T>
          <T w={49} className="ml-[50px]">Markers</T>
          <div className="ml-[23px] h-[27px] w-px bg-[#333]" />
          <More className="-mt-[2px] ml-[31px]" />
        </div>
      </div>
      <div className="flex h-[34px] items-center">
        <Svg w={28} h={20} className="ml-[12px]"><path d="M0 11H6L10.500 15L15 11H20V18H0Z" fill="#b4b4b4" /><path d="M2 13.500H4" stroke="#232323" strokeWidth="1.500" /><path d="M10.500 1V12M7 8L10.500 12.500L14 8" stroke="#b4b4b4" strokeWidth="2" /><path d="M22 16.500H27.500L24.700 20Z" fill="#b4b4b4" /></Svg>
        <T w={57} className="ml-[70px]">Contents:</T>
        <div className="ml-[8px] flex h-[25px] w-[203px] items-center rounded-sm border border-[#303030] bg-[#1d1d1d] text-[#c8c8c8]">
          <T w={38} className="ml-[8px]">Drives</T><Down className="-mt-px ml-[139px]" />
        </div>
        <Svg w={8} h={12} className="ml-[15px]"><path d="M8 0V12L0 6Z" fill="#4a4a4a" /></Svg>
      </div>
      <div className="mt-px flex h-[420px] pl-[6px]">
        <div className="flex h-[417px] w-[91px] flex-col overflow-hidden rounded-sm border border-[#2d2d2d] bg-[#1d1d1d] pt-px">
          <div className="flex h-[24px] items-center">
            <Down className="-mt-[3px] ml-[8px]" />
            <Svg w={20} h={9} className="-mt-px ml-[12px]"><rect width="20" height="8.500" rx="1" fill="#b4b4b4" /><path d="M2 2.500H4" stroke="#222" strokeWidth="1.500" /></Svg>
            <T w={38} className="ml-[8px]">Drives</T>
          </div>
          {["C:", "Data A", "Data B"].map((d, i) => (
            <div key={d} className="flex h-[23.800px] items-center">
              <Right className="-mt-[4px] ml-[37px]" /><Drive win={i === 0} className="ml-[14px]" />
              <span className="ml-[8px] whitespace-pre">{d}</span>
            </div>
          ))}
          <div className="flex h-[24px] items-center">
            <Right className="-mt-[4px] ml-[8px]" />
            <Svg w={18} h={14} className="ml-[17px]"><path d="M2 0H18V8H7L5 5L2 6Z" fill="#b4b4b4" /><path d="M3.500 2.500H5.500" stroke="#222" strokeWidth="1.500" /><path d="M1.500 14Q1 10 5 7.500M1.500 7H5.500V11" stroke="#b4b4b4" strokeWidth="1.600" /></Svg>
            <T w={58} className="ml-[9px]">Shortcuts</T>
          </div>
          <div className="mt-auto h-[13px] w-[50px] shrink-0 rounded-full bg-[#333]" />
        </div>
        <div className="flex w-[12px] flex-col items-center bg-[#303030]">
          <Svg w={4} h={8} className="mt-[21px]"><path d="M4 0V8L0 4Z" fill="#777" /></Svg>
          <Svg w={4} h={31} className="mt-[165px]"><path d="M.7 0V31M3.300 0V31" stroke="#aaa" strokeDasharray="1 1" /></Svg>
        </div>
        <div className="flex w-[288px] flex-col">
          <div className="flex h-[26px] shrink-0 items-center">
            <T w={36} className="ml-[6px]">Name</T><UpArrow className="-mt-[4px] ml-[3px]" />
            <div className="ml-[196px] h-[18px] w-px bg-[#2f2f2f]" />
            <T w={29} className="ml-[5px]">Dura</T>
          </div>
          <div className="flex h-[354px] shrink-0 flex-col rounded-sm border border-[#2d2d2d] bg-[#1d1d1d]">
            {[["C:", 12], ["Data A (D:)", 68], ["Data B (F:)", 66]].map(([d, w], i) => (
              <div key={d} className="flex h-[23.900px] items-center border-b border-[#2b2b2b]">
                <Right className="-mt-[4px] ml-[7px]" /><Drive win={i === 0} className="ml-[16px] mt-[2px]" />
                <T w={Number(w)} className="ml-[7px] mt-[2px]">{String(d)}</T>
              </div>
            ))}
            <div className="mt-auto h-[13px] w-[51px] rounded-full bg-[#333]" />
          </div>
          <div className="flex h-[41px] shrink-0 items-center">
            <Play c="#4a4a4a" className="-mt-px ml-[100px]" /><Loop className="-mt-px ml-[22px]" /><Speaker className="ml-[15px]" />
          </div>
        </div>
      </div>
    </section>
  );
}

function HistoryPanel() {
  return (
    <section className="mt-[6px] flex h-[84px] flex-col bg-[#232323]">
      <div className="flex h-[36px]">
        <div className="ml-[14px]"><Tab w={69} tw={44}>History</Tab></div>
        <div className="flex items-center"><T w={35} className="ml-[26px]">Video</T></div>
      </div>
      <div className="mx-[6px] mt-[4px] flex h-[7px] overflow-hidden rounded-sm border border-[#303030] bg-[#1d1d1d]">
        <div className="h-full w-[373px] overflow-hidden bg-[#474747]">
          <span className="-mt-[12px] ml-[26px] block text-[13px] leading-[15px] text-[#999]">▪  Open</span>
        </div>
      </div>
      <div className="flex h-[37px] items-center">
        <T w={45} className="ml-[6px] mt-[3px]">0 Undo</T>
        <Trash className="ml-[324px] mt-px" />
      </div>
    </section>
  );
}

function EssentialPanel() {
  return (
    <section className="ml-[6px] flex h-[788px] flex-1 flex-col bg-[#232323] pr-px">
      <div className="flex h-[36px] shrink-0 items-center border-b border-[#2d2d2d]">
        <T w={96} className="ml-[15px] text-[#c8c8c8]">Essential Sound</T><Burger className="ml-[13px] text-[#b4b4b4]" />
      </div>
      <div className="flex h-[38px] shrink-0 items-center border-b border-[#2d2d2d] pt-[6px]"><T w={73} className="ml-[14px] italic">No Selection</T></div>
      <div className="flex h-[45px] shrink-0 items-center border-b border-[#2d2d2d] text-[#484848]">
        <T w={41} className="-mt-px ml-[14px]">Preset:</T>
        <div className="-mt-px ml-[7px] flex h-[25px] w-[416px] items-center justify-end rounded-sm bg-[#292929] pr-[7px]"><Down /></div>
      </div>
      <div className="h-[39px] shrink-0 border-b border-[#2d2d2d]" />
    </section>
  );
}

function Levels() {
  const ticks = Array.from({ length: 61 }, (_, i) => 418.5 + i * 18.78);
  return (
    <section className="flex h-[119px] w-[1158px] shrink-0 flex-col bg-[#232323]">
      <div className="flex h-[35px] items-center text-[#c8c8c8]"><T w={38} className="ml-[15px]">Levels</T><Burger className="ml-[14px] text-[#b4b4b4]" /></div>
      <div className="ml-[6px] mt-[5px]">
        <Svg w={1145} h={76} box="415 923 1145 76">
          <g shapeRendering="crispEdges">
            <rect x="415.500" y="923.500" width="1143" height="53" fill="#1d1d1d" stroke="#000" />
            <path d="M1546.500 924V976M1547 949.500H1559" stroke="#000" strokeWidth="2" />
            <path d="M417 924V949M417 951V975" stroke="#7d7a00" />
            <path d="M418.500 924V949M418.500 951V975" stroke="#c9c000" />
            {ticks.map((x, i) => <path key={i} d={`M${x} 977V${i % 3 ? 979 : 982}`} stroke="#9a9a9a" />)}
          </g>
          <g fontFamily="Noto Sans, sans-serif" fontSize="11.500" fill="#9a9a9a">
            <text x="415.500" y="996" textLength="14" lengthAdjust="spacingAndGlyphs">dB</text>
            {Array.from({ length: 20 }, (_, i) => {
              const v = -57 + i * 3;
              return <text key={v} x={ticks[(i + 1) * 3]} y="996" textAnchor="middle">{v}</text>;
            })}
          </g>
        </Svg>
      </div>
    </section>
  );
}

function SelectionView() {
  const b = "text-[#2d8ceb]";
  return (
    <section className="ml-[6px] flex h-[119px] w-[346px] flex-col bg-[#232323]">
      <div className="flex h-[35px] items-center text-[#c8c8c8]"><T w={92} className="ml-[15px]">Selection/View</T><Burger className="ml-[13px] text-[#b4b4b4]" /></div>
      <div className="flex h-[27px] items-center"><T w={29} className="ml-[76px]">Start</T><T w={23} className="ml-[61px]">End</T><T w={53} className="ml-[66px]">Duration</T></div>
      <div className="flex h-[22px] items-center"><T w={56} className="ml-[14px]">Selection</T><T w={53} className={"ml-[8px] " + b}>0:00.000</T><T w={53} className={"ml-[37px] " + b}>0:00.000</T><T w={53} className={"ml-[36px] " + b}>0:00.000</T></div>
      <div className="flex h-[29px] items-center"><T w={30} className="ml-[14px]">View</T><T w={53} className={"ml-[34px] " + b}>0:00.000</T><T w={53} className={"ml-[37px] " + b}>0:00.918</T><T w={53} className={"ml-[36px] " + b}>0:00.918</T></div>
    </section>
  );
}

function Header() {
  const menu: [string, number, string][] = [["File", 23, "ml-[7px]"], ["Edit", 26, "ml-[14px]"], ["Multitrack", 66, "ml-[14px]"], ["Clip", 26, "ml-[14px]"], ["Effects", 44, "ml-[14px]"], ["Favorites", 58, "ml-[14px]"], ["View", 32, "ml-[14px]"], ["Window", 55, "ml-[14px]"], ["Help", 32, "ml-[14px]"]];
  return (
    <header className="h-[54px] border-b-2 border-[#eef0f2] bg-white">
      <div className="flex h-px"><div className="ml-[809px] h-px w-[59px] bg-[#1ec3c3]" /><div className="h-px w-[242px] bg-[#3c3c3c]" /></div>
      <div className="flex h-[28px] items-center">
        <div className="-mt-[4px] ml-[3px] flex h-[17px] w-[17px] items-center justify-center rounded-[3px] bg-[#00005b] text-[9px] font-bold text-[#9999ff]">Au</div>
        <T w={106} className="-mt-[2px] ml-[7px] text-[15px] text-[#999]">Adobe Audition</T>
        <Svg w={130} h={13} className="-mt-[3px] ml-[1632px]"><path d="M0 6.500H12M58.500 3.500H67.500V12.500H58.500ZM60.500 3V.5H70V10H68M117.500 .8L129 12.200M129 .8L117.500 12.200" stroke="#888" strokeWidth="1.100" /></Svg>
      </div>
      <div className="flex h-[24px] items-center text-[15px] text-black">
        {menu.map(([t, w, m]) => <T key={t} w={w} className={m}>{t}</T>)}
      </div>
    </header>
  );
}

function Toolbar() {
  const d = "#4a4a4a";
  return (
    <div className="flex h-[31px] items-center bg-[#232323]">
      <Svg w={4} h={20} className="ml-[5px]"><path d="M0 .5H3.500M0 3H3.500M0 5.500H3.500M0 8H3.500M0 10.500H3.500M0 13H3.500M0 15.500H3.500M0 18H3.500" stroke="#444" /></Svg>
      <div className="ml-[3px] flex h-[27px] w-[231px] rounded-sm border border-[#2c2c2c] bg-[#1a1a1a]">
        <div className="flex w-[114px] items-center border-r border-[#2c2c2c] bg-[#151515]">
          <Svg w={20} h={15} className="ml-[13px]"><path d="M.8 .8H19.200V14.200H.8Z" stroke="#2d8ceb" strokeWidth="1.400" /><path d="M2 7.500H18M5 5V10M7.500 4V11M10 5.500V9.500M12.500 3.500V11.500M15 5.500V9.500" stroke="#2d8ceb" strokeWidth="1.200" /></Svg>
          <T w={63} className="ml-[9px] text-[#2d8ceb]">Waveform</T>
        </div>
        <Svg w={21} h={15} className="ml-[14px] self-center"><path d="M.8 .8H20V14.200H.8Z" fill="#555" stroke="#b4b4b4" strokeWidth="1.400" /><path d="M8 1V5.500M1 5.500H20M1 10H13M13 10V14M13 8V10M8 5.500H20" stroke="#c8c8c8" strokeWidth="1.300" /></Svg>
        <T w={63} className="ml-[8px] self-center">Multitrack</T>
      </div>
      <div className="ml-[26px] h-full w-[2px] bg-[#303030]" />
      <Svg w={20} h={14} className="ml-[31px]"><rect width="20" height="14" fill="#b4b4b4" /><path d="M1 1H19V8L18 5L17.500 8L16.500 6V9L15 5L14 9L13 7L12 10L11 7L9.500 9L8.500 6L7 10L6 7L5 9L4 5L3 9L2 6L1 8Z" fill="#2b2b2b" /></Svg>
      <Svg w={20} h={14} className="ml-[13px]"><path d="M.7 .7H19.300V13.300H.7Z" stroke="#b4b4b4" strokeWidth="1.400" /><path d="M1 8L3 6L5 9L7.500 8L10 3L12.500 10L15 5L17 9L19 7" stroke="#b4b4b4" strokeWidth="1.400" /></Svg>
      <div className="ml-[14px] h-full w-px bg-[#1b1b1b]" />
      <Svg w={23} h={20} className="ml-[12px]"><path d="M0 0L9 9L5 9.500L0 14Z" fill={d} /><path d="M16.500 6V18M10.500 12H22.500M14.500 8L16.500 6L18.500 8M14.500 16L16.500 18L18.500 16M12.500 10L10.500 12L12.500 14M20.500 10L22.500 12L20.500 14" stroke={d} strokeWidth="1.400" /></Svg>
      <Svg w={24} h={22} className="ml-[11px]"><path d="M1 7L9 1L20 13L14 19L11 18Z" fill={d} /><path d="M7 8L9 6.500M9 10L13 14" stroke="#222" strokeWidth="2" /><path d="M18 22H22V17Z" fill={d} /></Svg>
      <Svg w={25} h={20} className="ml-[8px]"><path d="M1 0V20M24 0V20M4 9.500H21M8 5.500L4 9.500L8 13.500M17 5.500L21 9.500L17 13.500" stroke={d} strokeWidth="1.600" /></Svg>
      <div className="ml-[7px] flex h-[27px] w-[28px] items-center justify-center rounded-sm border border-[#303030] bg-[#141414]">
        <Svg w={9} h={18}><path d="M0 .7Q4.500 .7 4.500 4V14Q4.500 17.300 0 17.300M9 .7Q4.500 .7 4.500 4M4.500 14Q4.500 17.300 9 17.300" stroke="#2d8ceb" strokeWidth="1.400" /></Svg>
      </div>
      <Svg w={19} h={18} className="ml-[12px]"><path d="M1 1H18V17H1Z" stroke={d} strokeWidth="1.600" strokeDasharray="3.500 2" /></Svg>
      <Svg w={21} h={19} className="ml-[12px]"><ellipse cx="11" cy="6.500" rx="8.800" ry="5.500" stroke={d} strokeWidth="1.500" transform="rotate(-12 11 6.500)" /><path d="M4 11Q1 13 4 15Q6 13 4 11M4 15Q6 17 5 19" stroke={d} strokeWidth="1.300" /></Svg>
      <Svg w={21} h={20} className="ml-[12px]"><path d="M21 0L12 13L8 10L17 1.500ZM7 11L11 14Q9 21 0 19.500Q4 18 7 11Z" fill={d} /></Svg>
      <Svg w={22} h={20} className="ml-[13px]"><g transform="rotate(-45 12 11)"><rect x="2" y="7" width="20" height="8" rx="3" fill={d} /><path d="M8.500 7V15M15.500 7V15M10.500 9.500H11.500M13 9.500H14M10.500 12.500H11.500M13 12.500H14" stroke="#232323" strokeWidth="1.300" /></g><path d="M2 3H4M5 1H7M1 6H3M7 4H9" stroke={d} strokeWidth="1.500" /></Svg>
      <div className="ml-[546px] h-full w-px bg-[#191919]" />
      <T w={45} className="ml-[28px] text-[#2d8ceb]">Default</T>
      <Burger className="ml-[17px] text-[#2d8ceb]" />
      <T w={118} className="ml-[26px]">Edit Audio to Video</T>
      <T w={105} className="ml-[55px]">Radio Production</T>
      <More className="-mt-[4px] ml-[50px]" />
      <div className="ml-[10px] h-full w-[2px] bg-[#303030]" />
      <div className="ml-[4px] flex h-[24px] w-[243px] items-center rounded-sm border border-[#2f2f2f] bg-[#141414]">
        <Lens className="ml-[6px]" /><T w={73} className="ml-[15px] mt-[2px] text-[#b8b8b8]">Search Help</T>
      </div>
    </div>
  );
}

function StatusBar() {
  const s = "h-[15px] w-px bg-[#333]";
  return (
    <div className="flex h-[25px] items-center bg-[#232323]">
      <T w={145} className="ml-[10px]">Opened in 0.10 seconds</T>
      <div className={"ml-[1066px] " + s} /><div className={"ml-[62px] " + s} /><div className={"ml-[125px] " + s} />
      <T w={165} className="ml-[11px] mt-[2px]">44100 Hz ● 16-bit ● Stereo</T><div className={"ml-[8px] " + s} />
      <T w={61} className="ml-[10px]">158.25 KB</T><div className={"ml-[8px] " + s} />
      <T w={52} className="ml-[21px]">0:00.918</T><div className={"ml-[9px] " + s} />
      <T w={82} className="ml-[9px]">27.27 GB free</T><div className={"ml-[9px] " + s} />
    </div>
  );
}

function Chrome({ badge, color }: { badge?: string; color?: string }) {
  return (
    <Svg w={34} h={34}>
      <circle cx="17" cy="17" r="15" fill="#fbc116" />
      <path d="M17 17L4 9.500A15 15 0 0 1 30 9.500H17Z" fill="#e33b2e" />
      <path d="M4 9.500A15 15 0 0 0 17 32L23.500 20.800L17 17L10.500 20.800Z" fill="#239a48" />
      <circle cx="17" cy="17" r="7.400" fill="#fff" /><circle cx="17" cy="17" r="5.800" fill="#3079ec" />
      {badge && <><circle cx="23.800" cy="24.300" r="9.700" fill={color} /><text x="23.800" y="28.600" fontSize="11.500" fontFamily="Noto Sans, sans-serif" fill="#e2e2f2" textAnchor="middle">{badge}</text></>}
    </Svg>
  );
}

function Taskbar() {
  const apps = [
    <Svg w={30} h={30}>
      <defs>
        <linearGradient id="e1" x1="0" y1="0" x2="1" y2=".4"><stop offset="0" stopColor="#1aa5e8" /><stop offset=".5" stopColor="#35c4d0" /><stop offset="1" stopColor="#6be83f" /></linearGradient>
        <linearGradient id="e2" x1="0" y1="0" x2="0" y2="1"><stop offset="0" stopColor="#1493e2" /><stop offset="1" stopColor="#0b6cc4" /></linearGradient>
      </defs>
      <path d="M1 12A15 13.500 0 0 1 30 13C30 20 22 22 18.500 19.500C17 18 20 17 19.500 13.500C18 7 6 6 1 12Z" fill="url(#e1)" />
      <path d="M0 16C1 8 13 6.500 17.500 10.500C13 10.500 9 15 12 21C14.500 26 21 27 27.500 23.500C23 31 14 31 9 29C3 26.500 0 21 0 16Z" fill="url(#e2)" />
      <path d="M11 17C11 26 20 27.500 28 23.300C23 30.500 13 32 8 25C5 20 8 13 14 12C12 13 11 15 11 17Z" fill="#114a8b" />
    </Svg>,
    <Svg w={30} h={28}><path d="M2 2Q2 1 3 1H13L15 3.500V9H2Z" fill="#e5a00e" /><path d="M2 6H13.500L16 3.500H29V23Q29 24 28 24H3Q2 24 2 23Z" fill="#ffd058" /><path d="M7 24V16Q7 13.500 9.500 13.500H21.500Q24 13.500 24 16V24H19.500V18H11.500V24Z" fill="#3f8fdc" /></Svg>,
    <Chrome />,
    <div className="flex h-[30px] w-[30px] items-center justify-center rounded-[5px] bg-[#fd8c50]">
      <Svg w={22} h={22}><path d="M3 1.500C5.500 7 9 9.500 13 9.800C13.500 7.500 12.500 4.500 10 2.500C14.500 4 17.500 8 17.500 12.500C17.500 15.500 20.500 16 21.500 19.500C19.500 17.500 17 17.800 14.500 18.800C11 20 6.500 19.500 4 17C7 17.500 9.500 17 11 15.500C7 15.500 3.500 13 1.500 9.500C4 11.500 6.500 12.500 9 12.500C5.500 10 3 6 3 1.500Z" fill="#fff" /></Svg>
    </div>,
    <Chrome badge="M" color="#7e57c2" />,
    <Chrome badge="S" color="#0288d1" />,
    <Svg w={30} h={30}><path d="M22 0L30 3.500V26.500L22 30L20 28V2Z" fill="#27a9f2" /><path d="M0 10L3 7.500L22 22V30L0 12Z" fill="#0a7bc9" /><path d="M0 20L3 22.500L22 8V0L0 18Z" fill="#1192dc" /></Svg>,
    <div className="flex h-[30px] w-[30px] items-center justify-center rounded-full bg-[#5865f2] text-[20px] text-white"><FaDiscord /></div>,
    <div className="flex h-[27px] w-[27px] items-center justify-center rounded-[4px] bg-[#330000] pb-[2px] text-[15px] font-bold text-[#ff9a00]">Ai</div>,
    <div className="flex h-[27px] w-[27px] items-center justify-center rounded-[4px] bg-[#00005b] pb-[2px] text-[14px] font-bold text-[#9999ff]">Au</div>,
  ];
  return (
    <footer className="flex h-[50px] items-center bg-black text-white">
      <Svg w={20} h={20} className="ml-[20px]"><path d="M0 3L8.500 1.700V9.500H0ZM9.500 1.500L20 0V9.500H9.500ZM0 10.500H8.500V18.300L0 17ZM9.500 10.500H20V20L9.500 18.500Z" fill="#fff" /></Svg>
      <div className="ml-[20px] flex h-[50px] w-[360px] items-center border border-[#606060] bg-[#333]">
        <Svg w={21} h={21} className="ml-[14px]"><circle cx="13" cy="8" r="6.700" stroke="#e6e6e6" strokeWidth="1.400" /><path d="M8.300 12.700L.5 20.500" stroke="#e6e6e6" strokeWidth="1.500" /></Svg>
        <T w={163} className="ml-[14px] text-[18.500px] text-[#dedede]">Type here to search</T>
        <Svg w={95} h={37} className="ml-[50px] self-end">
          <defs>
            <linearGradient id="hill" x1="0" y1="0" x2="0" y2="1"><stop offset="0" stopColor="#a4c86a" /><stop offset="1" stopColor="#3f9a7c" /></linearGradient>
            <linearGradient id="wall" x1="0" x2="1"><stop offset="0" stopColor="#b08a62" /><stop offset=".5" stopColor="#e0c49a" /><stop offset="1" stopColor="#a86a52" /></linearGradient>
          </defs>
          <path d="M0 37C6 20 24 15 46 15S88 20 94 37Z" fill="url(#hill)" />
          <path d="M56 32Q72 28 73 20L90 30V33H60Z" fill="#4c6a24" opacity=".5" />
          <path d="M20 17H73V26Q46 38 20 26Z" fill="url(#wall)" />
          <path d="M16 10Q18 6 24 6Q46 -5 70 6Q77 7 77 10Q75 16 70 17Q46 27 22 17Q16 14 16 10Z" fill="#8f8de2" />
          <path d="M20 15Q46 22 73 15L70 18Q46 27 22 18Z" fill="#3a58b4" />
          <ellipse cx="46.500" cy="8.500" rx="21.500" ry="7.500" fill="#16307e" stroke="#7f93e6" />
          <path d="M27 6Q46 -2 66 6Q46 0 27 6Z" fill="#3a62cc" />
          <ellipse cx="46.500" cy="11" rx="16" ry="4.800" stroke="#4a68cc" /><ellipse cx="46.500" cy="12.500" rx="11" ry="3" stroke="#6a84dc" />
          <path d="M48 23H56V31H48Z" fill="#f3dede" /><path d="M50 24V31M54 24V31M50 27.500H54" stroke="#e04a4a" strokeWidth="1.600" />
        </Svg>
      </div>
      <div className="ml-[3px] flex h-full">
        {apps.map((a, i) => (
          <div key={i} className={"flex w-[62px] flex-col items-center " + (i === 1 ? "bg-[#353535]" : "")}>
            <div className="flex h-[47px] items-center justify-center pt-[3px]">{a}</div>
            <div className={"h-[3px] " + (i === 1 ? "w-[62px] bg-[#90e4ee]" : i > 2 ? "w-[51px] bg-[#90e4ee]" : "w-0")} />
          </div>
        ))}
      </div>
      <Svg w={16} h={9} className="ml-[539px]"><path d="M.7 8.500L8 1L15.300 8.500" stroke="#fff" strokeWidth="1.500" /></Svg>
      <Svg w={13} h={20} className="ml-[15px]"><rect x="2" width="9" height="14" rx="1" fill="#fff" /><path d="M.7 10V13Q.7 16 4 16H9Q12.300 16 12.300 13V10M6.500 16V19M3 19.300H10" stroke="#fff" strokeWidth="1.200" /></Svg>
      <Svg w={20} h={14} className="ml-[14px]"><path d="M3 3.500H18V13H5V9" stroke="#fff" strokeWidth="1.300" /><rect x="7" y="5" width="10" height="6.500" fill="#fff" /><path d="M18.500 6H20V10.500H18.500ZM0 2H5V5L3.500 7H1.500L0 5Z" fill="#fff" /><path d="M1.200 0V2M3.800 0V2M2.500 6V9H5" stroke="#fff" strokeWidth="1.200" /></Svg>
      <Svg w={16} h={16} className="ml-[13px]"><path d="M.7 16Q1 2 15.500 1M4.500 16Q5 6 15.500 5M8.500 16Q9 10 15.500 9" stroke="#c4c4c4" strokeWidth="1.500" /><circle cx="13.500" cy="14" r="2" fill="#fff" /></Svg>
      <Svg w={21} h={17} className="ml-[11px]"><path d="M.7 5.500H4L8 1.500V15.500L4 11.500H.7Z" stroke="#fff" strokeWidth="1.300" /><path d="M11 6Q12.500 8.500 11 11" stroke="#fff" strokeWidth="1.300" /><path d="M14 3.500Q17 8.500 14 13.500M17 1Q21.500 8.500 17 16" stroke="#777" strokeWidth="1.300" /></Svg>
      <T w={28} className="ml-[13px] text-[15px]">ENG</T>
      <div className="ml-[15px] flex w-[68px] flex-col items-center text-[15px] leading-[23px]">
        <T w={53}>1:52 AM</T><T w={68}>29/4/2024</T>
      </div>
      <Svg w={31} h={32} className="ml-[24px] mt-[8px]"><path d="M0 1H20V18H9L4.500 22V18H0Z" fill="#fff" /><path d="M4 5.500H16M4 9.500H16M4 13.500H12" stroke="#111" strokeWidth="1.300" /><circle cx="19.500" cy="20.500" r="9.700" fill="#2b2b2b" stroke="#707070" /><text x="19.500" y="25.300" fontSize="13" fontWeight="700" fontFamily="Noto Sans, sans-serif" fill="#fff" textAnchor="middle">3</text></Svg>
      <div className="ml-[14px] h-full w-px bg-[#777]" />
    </footer>
  );
}

export default function App() {
  return (
    <div className="flex h-[1080px] w-[1920px] flex-col overflow-hidden bg-[#161616] font-['Noto_Sans',sans-serif] text-[14px] leading-[20px] text-[#909090]">
      <Header />
      <Toolbar />
      <main className="mt-[4px] flex h-[913px]">
        <div className="ml-px w-[402px] shrink-0"><FilesPanel /><MediaPanel /><HistoryPanel /></div>
        <div className="ml-[6px] flex flex-1 flex-col">
          <div className="flex"><Editor /><EssentialPanel /></div>
          <div className="mt-[6px] flex"><Levels /><SelectionView /></div>
        </div>
      </main>
      <div className="mt-[3px]"><StatusBar /></div>
      <Taskbar />
    </div>
  );
}
